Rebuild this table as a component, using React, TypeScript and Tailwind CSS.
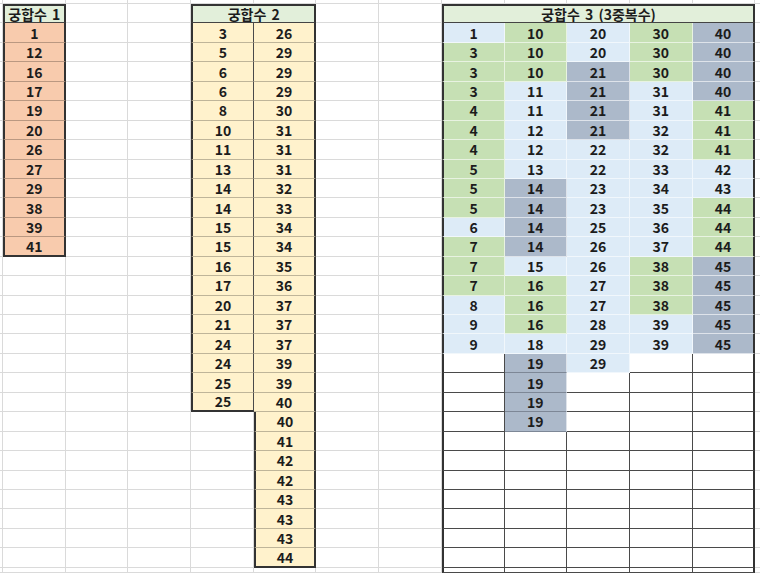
import React from "react";
import clsx from "clsx";

const T1 = [1, 12, 16, 17, 19, 20, 26, 27, 29, 38, 39, 41];
const T2L = [3, 5, 6, 6, 8, 10, 11, 13, 14, 14, 15, 15, 16, 17, 20, 21, 24, 24, 25, 25];
const T2R = [26, 29, 29, 29, 30, 31, 31, 31, 32, 33, 34, 34, 35, 36, 37, 37, 37, 39, 39, 40, 40, 41, 42, 42, 43, 43, 43, 44];
const T3 = [
  "1b 10g 20b 30g 40s",
  "3g 10g 20b 30g 40s",
  "3g 10g 21s 30g 40s",
  "3g 11b 21s 31b 40s",
  "4g 11b 21s 31b 41g",
  "4g 12b 21s 32b 41g",
  "4g 12b 22b 32b 41g",
  "5g 13b 22b 33b 42b",
  "5g 14s 23b 34b 43b",
  "5g 14s 23b 35b 44g",
  "6b 14s 25b 36b 44g",
  "7g 14s 26b 37b 44g",
  "7g 15b 26b 38g 45s",
  "7g 16g 27b 38g 45s",
  "8b 16g 27b 38g 45s",
  "9b 16g 28b 39b 45s",
  "9b 18b 29b 39b 45s",
  "_ 19s 29b _ _",
  "_ 19s _ _ _",
  "_ 19s _ _ _",
  "_ 19s _ _ _",
].map((row) => row.split(" "));

const BG: Record<string, string> = {
  b: "bg-[#ddebf7]",
  g: "bg-[#c6e0b4]",
  s: "bg-[#acb9ca]",
};

type Cell = { key: string; text?: string; cls: string };

const NROWS = 31;
const NCOLS = 14;

function cellFor(r: number, c: number): Cell | null {
  const key = `${r}-${c}`;
  const text =
    "flex items-center justify-center font-bold text-[14px] leading-none text-[#1c1c1c] overflow-hidden whitespace-nowrap [word-spacing:2px]";
  const plain = clsx(
    "bg-white border-solid border-t-0 border-l-0",
    c < NCOLS - 1 ? "border-r border-r-[#dadada]" : "border-r-0",
    "border-b border-b-[#dadada]"
  );

  // Table 1
  if (c === 1 && r >= 1 && r <= 13) {
    const header = r === 1;
    return {
      key,
      text: header ? "궁합수 1" : String(T1[r - 2]),
      cls: clsx(
        text,
        header ? "bg-[#e2efda]" : "bg-[#f8cbad]",
        "border-solid border-l-2 border-l-[#333] border-r-2 border-r-[#333]",
        header ? "border-t-2 border-t-[#333]" : "border-t-0",
        r === 13 ? "border-b-2 border-b-[#333]" : header ? "border-b border-b-[#444]" : "border-b border-b-black/25"
      ),
    };
  }

  // Table 2
  if (r === 1 && c === 4) {
    return {
      key,
      text: "궁합수 2",
      cls: clsx(
        text,
        "col-span-2 bg-[#e2efda] border-solid border-l-2 border-l-[#333] border-t-2 border-t-[#333] border-r-2 border-r-[#333] border-b border-b-[#444]"
      ),
    };
  }
  if (r === 1 && c === 5) return null;
  if (c === 4 && r >= 2 && r <= 21) {
    return {
      key,
      text: String(T2L[r - 2]),
      cls: clsx(
        text,
        "bg-[#fff2cc] border-solid border-t-0 border-l-2 border-l-[#333] border-r border-r-[#4a4a4a]",
        r === 21 ? "border-b-2 border-b-[#333]" : "border-b border-b-black/25"
      ),
    };
  }
  if (c === 5 && r >= 2 && r <= 29) {
    return {
      key,
      text: String(T2R[r - 2]),
      cls: clsx(
        text,
        "bg-[#fff2cc] border-solid border-t-0 border-r-2 border-r-[#333]",
        r >= 22 ? "border-l-2 border-l-[#333]" : "border-l-0",
        r === 29 ? "border-b-2 border-b-[#333]" : "border-b border-b-black/25"
      ),
    };
  }

  // Table 3
  if (r === 1 && c === 8) {
    return {
      key,
      text: "궁합수 3 (3중복수)",
      cls: clsx(
        text,
        "col-span-5 bg-[#e2efda] border-solid border-l-2 border-l-[#333] border-t-2 border-t-[#333] border-r-2 border-r-[#333] border-b border-b-[#444]"
      ),
    };
  }
  if (r === 1 && c > 8 && c <= 12) return null;
  if (c >= 8 && c <= 12 && r >= 2) {
    const row = T3[r - 2];
    const tok = row ? row[c - 8] : "_";
    const empty = tok === "_";
    const color = empty ? "" : tok.slice(-1);
    const val = empty ? "" : tok.slice(0, -1);
    return {
      key,
      text: val,
      cls: clsx(
        text,
        empty ? "bg-white" : BG[color],
        "border-solid border-t-0",
        c === 8 ? "border-l-2 border-l-[#333]" : "border-l-0",
        c === 12
          ? "border-r-2 border-r-[#333]"
          : empty
          ? "border-r border-r-[#4a4a4a]"
          : "border-r border-r-white/60",
        empty
          ? "border-b border-b-[#4a4a4a]"
          : color === "s" && r >= 19
          ? "border-b border-b-[#7d8796]"
          : "border-b border-b-white/60"
      ),
    };
  }

  return { key, cls: plain };
}

export default function App() {
  const cells: Cell[] = [];
  for (let r = 0; r < NROWS; r++) {
    for (let c = 0; c < NCOLS; c++) {
      const cell = cellFor(r, c);
      if (cell) cells.push(cell);
    }
  }
  return (
    <div
      className="w-[760px] h-[573px] overflow-hidden bg-white grid grid-cols-[3px_repeat(12,62.7px)_1fr] grid-rows-[4px_repeat(29,19.45px)_1fr]"
      style={{ fontFamily: '"Noto Sans CJK KR", "Noto Sans", sans-serif' }}
    >
      {cells.map((cell) => (
        <div key={cell.key} className={cell.cls}>
          {cell.text}
        </div>
      ))}
    </div>
  );
}
